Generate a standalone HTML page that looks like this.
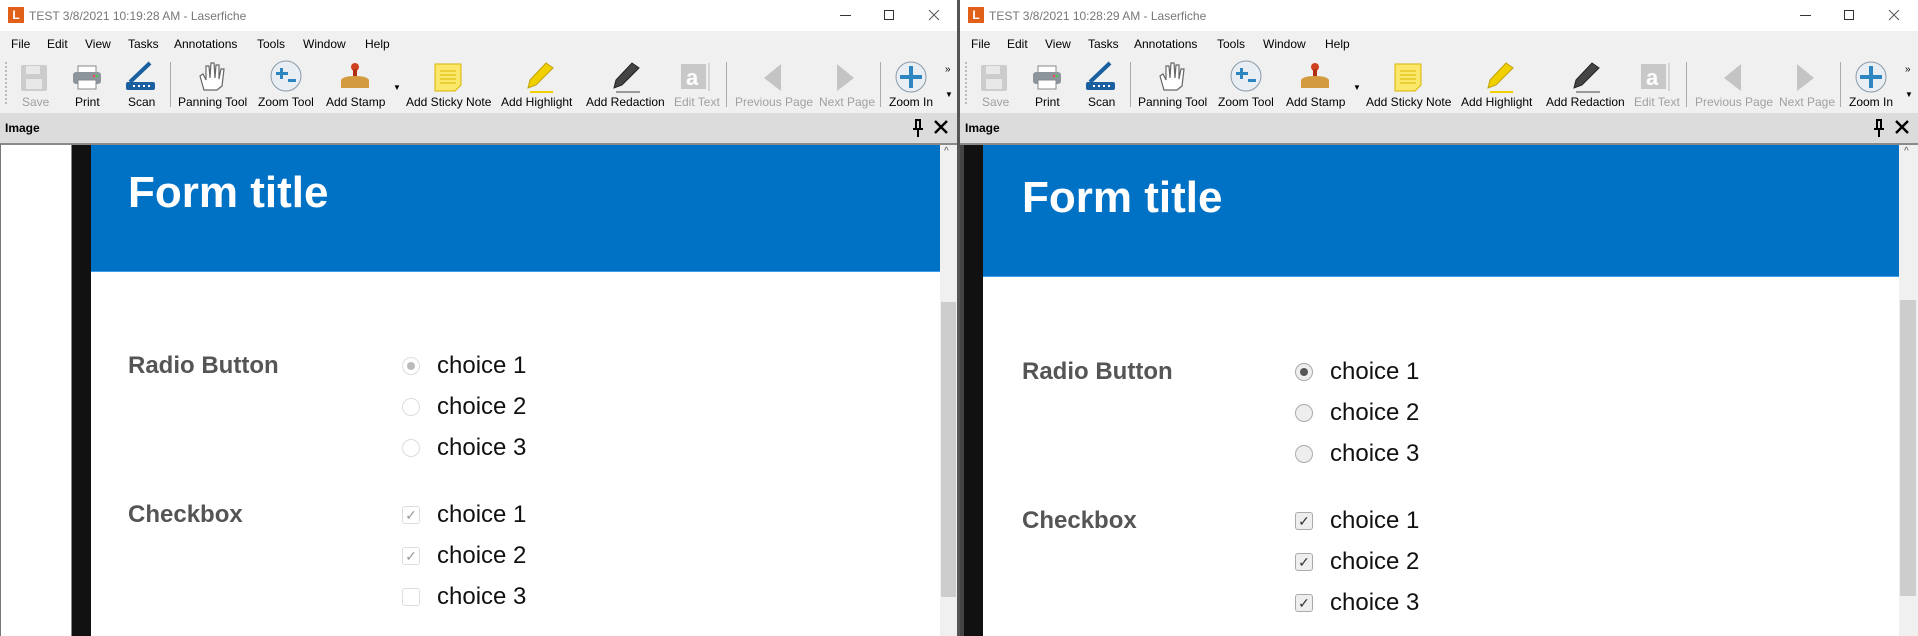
<!DOCTYPE html>
<html><head><meta charset="utf-8"><style>
*{margin:0;padding:0;box-sizing:border-box}
body{width:1918px;height:636px;overflow:hidden;background:#555;font-family:"Liberation Sans",Arial,sans-serif;position:relative}
.win{position:absolute;top:0;height:636px;background:#f0f0f0;overflow:hidden}
.a{position:absolute;white-space:nowrap}
.title{left:0;right:0;top:0;height:31px;background:#fff}
.tt{font-size:12px;color:#777;top:9px;left:29px}
.logo{left:8px;top:7px;width:16px;height:16px;background:#e0601a;color:#fff;font-size:12px;font-weight:bold;text-align:center;line-height:16px}
.menu{font-size:12px;color:#000;top:37px}
.lbl{font-size:12px;color:#000;top:95px}
.dis{color:#a0a0a0}
.sep{width:1px;height:45px;top:62px;background:#aaa}
.hdr{left:0;right:0;top:113px;height:30px;background:#dcdcdc}
.hdrt{font-size:12px;font-weight:bold;top:121px;left:5px}
.content{left:0;right:0;top:143px;bottom:0;background:#fff;border-top:2px solid #8a8a8a}
.ft{color:#fff;font-weight:bold;font-size:44px}
.fl{color:#555;font-weight:bold;font-size:24px}
.ch{color:#111;font-size:24px}
.rd{width:18px;height:18px;border-radius:50%;border:1px solid #ccc;background:#fff}
.cb{width:18px;height:18px;border-radius:3px;border:1px solid #ccc;background:#fff;color:#999;font-size:14px;text-align:center;line-height:16px}
</style></head><body>

<!-- LEFT WINDOW -->
<div class="win" style="left:0;width:957px">
 <div class="a title"></div>
 <div class="a logo">L</div>
 <div class="a tt">TEST 3/8/2021 10:19:28 AM - Laserfiche</div>
 <div class="a" style="left:840px;top:15px;width:11px;height:1px;background:#333"></div>
 <div class="a" style="left:884px;top:10px;width:10px;height:10px;border:1px solid #333"></div>
 <svg class="a" style="left:928px;top:9px" width="12" height="12"><path d="M1 1L11 11M11 1L1 11" stroke="#555" stroke-width="1"/></svg>
 <div class="a menu" style="left:11px">File</div><div class="a menu" style="left:47px">Edit</div><div class="a menu" style="left:85px">View</div><div class="a menu" style="left:128px">Tasks</div><div class="a menu" style="left:174px">Annotations</div><div class="a menu" style="left:257px">Tools</div><div class="a menu" style="left:303px">Window</div><div class="a menu" style="left:365px">Help</div>
 <div class="a" style="left:5px;top:62px;width:2px;height:42px;border-left:2px dotted #bbb"></div>
 <svg class="a" style="left:0;top:58px" width="957" height="36">
  <g fill="#ccc"><rect x="21" y="7" width="26" height="26" rx="2"/></g><rect x="26" y="8" width="14" height="8" fill="#e8e8e8"/><rect x="26" y="21" width="16" height="10" fill="#e8e8e8"/>
  <rect x="78" y="8" width="18" height="8" fill="#fff" stroke="#888"/><rect x="73" y="14" width="28" height="12" rx="3" fill="#8c959c"/><rect x="78" y="22" width="18" height="9" fill="#fff" stroke="#888"/><rect x="93" y="17" width="2" height="2" fill="#e44"/><rect x="96" y="17" width="2" height="2" fill="#4c4"/>
  <line x1="130" y1="24" x2="150" y2="5" stroke="#1a5fa0" stroke-width="4"/><rect x="126" y="24" width="29" height="8" rx="2" fill="#1a5fa0"/><g fill="#fff"><rect x="133" y="27" width="2" height="2"/><rect x="138" y="27" width="2" height="2"/><rect x="143" y="27" width="2" height="2"/><rect x="148" y="27" width="2" height="2"/></g>
  <path d="M204 32 L200 18 L203 16 L206 22 L206 8 L209 8 L210 20 L211 5 L214 5 L215 20 L216 7 L219 7 L219 21 L221 11 L224 11 L222 28 L217 32 Z" fill="#fff" stroke="#666" stroke-width="1.2"/>
  <circle cx="286" cy="18" r="15" fill="#e8eef3" stroke="#8a9aa8"/><rect x="276" y="14" width="12" height="3" fill="#2e86c1"/><rect x="280" y="10" width="3" height="11" fill="#2e86c1"/><rect x="288" y="21" width="8" height="3" fill="#2e86c1"/>
  <circle cx="355" cy="9" r="4" fill="#d04020"/><rect x="353" y="11" width="4" height="9" fill="#b03010"/><path d="M341 22 Q343 18 355 18 Q367 18 369 22 L369 30 L341 30 Z" fill="#d49a40"/>
  <text x="393" y="32" font-size="8" fill="#000">▼</text>
  <path d="M435 6 H461 V27 L455 33 H435 Z" fill="#fbe86a" stroke="#d8b400"/><g stroke="#d8b400"><line x1="440" y1="13" x2="456" y2="13"/><line x1="440" y1="17" x2="456" y2="17"/><line x1="440" y1="21" x2="456" y2="21"/><line x1="440" y1="25" x2="456" y2="25"/></g>
  <path d="M528 30 L530 22 L546 5 L553 10 L536 27 Z" fill="#f0d000" stroke="#c0a000"/><line x1="530" y1="34" x2="553" y2="34" stroke="#f0d000" stroke-width="2"/>
  <path d="M614 30 L616 22 L632 5 L639 10 L622 27 Z" fill="#444" stroke="#222"/><line x1="616" y1="34" x2="640" y2="34" stroke="#444"/>
  <rect x="681" y="6" width="25" height="25" fill="#c8c8c8"/><text x="686" y="27" font-size="22" font-weight="bold" fill="#fff">a</text><line x1="709" y1="5" x2="709" y2="33" stroke="#bbb"/>
  <path d="M781 6 L764 20 L781 33 Z" fill="#c4c4c4"/><path d="M837 6 L854 20 L837 33 Z" fill="#c4c4c4"/>
  <circle cx="911" cy="19" r="15" fill="#e8eef3" stroke="#8a9aa8"/><rect x="900" y="17" width="22" height="4" fill="#2e86c1"/><rect x="909" y="8" width="4" height="22" fill="#2e86c1"/>
 </svg>
 <div class="a sep" style="left:170px"></div><div class="a sep" style="left:726px"></div><div class="a sep" style="left:880px"></div>
 <div class="a" style="left:945px;top:64px;font-size:10px">»</div>
 <div class="a" style="left:945px;top:90px;font-size:8px">▼</div>
 <div class="a lbl dis" style="left:22px">Save</div><div class="a lbl" style="left:75px">Print</div><div class="a lbl" style="left:128px">Scan</div><div class="a lbl" style="left:178px">Panning Tool</div><div class="a lbl" style="left:258px">Zoom Tool</div><div class="a lbl" style="left:326px">Add Stamp</div><div class="a lbl" style="left:406px">Add Sticky Note</div><div class="a lbl" style="left:501px">Add Highlight</div><div class="a lbl" style="left:586px">Add Redaction</div><div class="a lbl dis" style="left:674px">Edit Text</div><div class="a lbl dis" style="left:735px">Previous Page</div><div class="a lbl dis" style="left:819px">Next Page</div><div class="a lbl" style="left:889px">Zoom In</div>
 <div class="a hdr"></div><div class="a hdrt">Image</div>
 <svg class="a" style="left:911px;top:118px" width="14" height="20"><path d="M4 2H10M5 2V11M9 2V11M2 11H12M7 11V19" stroke="#000" stroke-width="2" fill="none"/></svg>
 <svg class="a" style="left:934px;top:120px" width="14" height="14"><path d="M1 1L13 13M13 1L1 13" stroke="#000" stroke-width="2.4"/></svg>
 <div class="a content" style="border-left:1px solid #777"></div>
 <div class="a" style="left:71px;top:145px;width:1px;height:491px;background:#888"></div>
 <div class="a" style="left:72px;top:145px;width:19px;height:491px;background:#111"></div>
 <div class="a" style="left:91px;top:145px;width:849px;height:127px;background:#0072c6"></div>
 <div class="a" style="left:91px;top:271px;width:849px;height:1px;background:#3d9be9"></div>
 <div class="a" style="left:940px;top:145px;width:17px;height:491px;background:#f0f0f0"></div>
 <div class="a" style="left:941px;top:302px;width:15px;height:295px;background:#cdcdcd"></div>
 <div class="a" style="left:944px;top:146px;font-size:10px;color:#555">^</div>
 <div class="a ft" style="left:128px;top:168px">Form title</div>
 <div class="a fl" style="left:128px;top:352px">Radio Button</div>
 <div class="a fl" style="left:128px;top:501px">Checkbox</div>
 <div class="a rd" style="left:402px;top:357px;border-color:#ddd"><div style="width:8px;height:8px;border-radius:50%;background:#bbb;margin:4px"></div></div>
 <div class="a rd" style="left:402px;top:398px;border-color:#ddd"></div>
 <div class="a rd" style="left:402px;top:439px;border-color:#ddd"></div>
 <div class="a cb" style="left:402px;top:506px;border-color:#ddd">✓</div>
 <div class="a cb" style="left:402px;top:547px;border-color:#ddd">✓</div>
 <div class="a cb" style="left:402px;top:588px;border-color:#ddd"></div>
 <div class="a ch" style="left:437px;top:352px">choice 1</div><div class="a ch" style="left:437px;top:393px">choice 2</div><div class="a ch" style="left:437px;top:434px">choice 3</div>
 <div class="a ch" style="left:437px;top:501px">choice 1</div><div class="a ch" style="left:437px;top:542px">choice 2</div><div class="a ch" style="left:437px;top:583px">choice 3</div>
</div>

<!-- RIGHT WINDOW -->
<div class="win" style="left:960px;width:958px">
 <div class="a title"></div>
 <div class="a logo">L</div>
 <div class="a tt">TEST 3/8/2021 10:28:29 AM - Laserfiche</div>
 <div class="a" style="left:840px;top:15px;width:11px;height:1px;background:#333"></div>
 <div class="a" style="left:884px;top:10px;width:10px;height:10px;border:1px solid #333"></div>
 <svg class="a" style="left:928px;top:9px" width="12" height="12"><path d="M1 1L11 11M11 1L1 11" stroke="#555" stroke-width="1"/></svg>
 <div class="a menu" style="left:11px">File</div><div class="a menu" style="left:47px">Edit</div><div class="a menu" style="left:85px">View</div><div class="a menu" style="left:128px">Tasks</div><div class="a menu" style="left:174px">Annotations</div><div class="a menu" style="left:257px">Tools</div><div class="a menu" style="left:303px">Window</div><div class="a menu" style="left:365px">Help</div>
 <div class="a" style="left:5px;top:62px;width:2px;height:42px;border-left:2px dotted #bbb"></div>
 <svg class="a" style="left:0;top:58px" width="958" height="36">
  <g fill="#ccc"><rect x="21" y="7" width="26" height="26" rx="2"/></g><rect x="26" y="8" width="14" height="8" fill="#e8e8e8"/><rect x="26" y="21" width="16" height="10" fill="#e8e8e8"/>
  <rect x="78" y="8" width="18" height="8" fill="#fff" stroke="#888"/><rect x="73" y="14" width="28" height="12" rx="3" fill="#8c959c"/><rect x="78" y="22" width="18" height="9" fill="#fff" stroke="#888"/><rect x="93" y="17" width="2" height="2" fill="#e44"/><rect x="96" y="17" width="2" height="2" fill="#4c4"/>
  <line x1="130" y1="24" x2="150" y2="5" stroke="#1a5fa0" stroke-width="4"/><rect x="126" y="24" width="29" height="8" rx="2" fill="#1a5fa0"/><g fill="#fff"><rect x="133" y="27" width="2" height="2"/><rect x="138" y="27" width="2" height="2"/><rect x="143" y="27" width="2" height="2"/><rect x="148" y="27" width="2" height="2"/></g>
  <path d="M204 32 L200 18 L203 16 L206 22 L206 8 L209 8 L210 20 L211 5 L214 5 L215 20 L216 7 L219 7 L219 21 L221 11 L224 11 L222 28 L217 32 Z" fill="#fff" stroke="#666" stroke-width="1.2"/>
  <circle cx="286" cy="18" r="15" fill="#e8eef3" stroke="#8a9aa8"/><rect x="276" y="14" width="12" height="3" fill="#2e86c1"/><rect x="280" y="10" width="3" height="11" fill="#2e86c1"/><rect x="288" y="21" width="8" height="3" fill="#2e86c1"/>
  <circle cx="355" cy="9" r="4" fill="#d04020"/><rect x="353" y="11" width="4" height="9" fill="#b03010"/><path d="M341 22 Q343 18 355 18 Q367 18 369 22 L369 30 L341 30 Z" fill="#d49a40"/>
  <text x="393" y="32" font-size="8" fill="#000">▼</text>
  <path d="M435 6 H461 V27 L455 33 H435 Z" fill="#fbe86a" stroke="#d8b400"/><g stroke="#d8b400"><line x1="440" y1="13" x2="456" y2="13"/><line x1="440" y1="17" x2="456" y2="17"/><line x1="440" y1="21" x2="456" y2="21"/><line x1="440" y1="25" x2="456" y2="25"/></g>
  <path d="M528 30 L530 22 L546 5 L553 10 L536 27 Z" fill="#f0d000" stroke="#c0a000"/><line x1="530" y1="34" x2="553" y2="34" stroke="#f0d000" stroke-width="2"/>
  <path d="M614 30 L616 22 L632 5 L639 10 L622 27 Z" fill="#444" stroke="#222"/><line x1="616" y1="34" x2="640" y2="34" stroke="#444"/>
  <rect x="681" y="6" width="25" height="25" fill="#c8c8c8"/><text x="686" y="27" font-size="22" font-weight="bold" fill="#fff">a</text><line x1="709" y1="5" x2="709" y2="33" stroke="#bbb"/>
  <path d="M781 6 L764 20 L781 33 Z" fill="#c4c4c4"/><path d="M837 6 L854 20 L837 33 Z" fill="#c4c4c4"/>
  <circle cx="911" cy="19" r="15" fill="#e8eef3" stroke="#8a9aa8"/><rect x="900" y="17" width="22" height="4" fill="#2e86c1"/><rect x="909" y="8" width="4" height="22" fill="#2e86c1"/>
 </svg>
 <div class="a sep" style="left:170px"></div><div class="a sep" style="left:726px"></div><div class="a sep" style="left:880px"></div>
 <div class="a" style="left:945px;top:64px;font-size:10px">»</div>
 <div class="a" style="left:945px;top:90px;font-size:8px">▼</div>
 <div class="a lbl dis" style="left:22px">Save</div><div class="a lbl" style="left:75px">Print</div><div class="a lbl" style="left:128px">Scan</div><div class="a lbl" style="left:178px">Panning Tool</div><div class="a lbl" style="left:258px">Zoom Tool</div><div class="a lbl" style="left:326px">Add Stamp</div><div class="a lbl" style="left:406px">Add Sticky Note</div><div class="a lbl" style="left:501px">Add Highlight</div><div class="a lbl" style="left:586px">Add Redaction</div><div class="a lbl dis" style="left:674px">Edit Text</div><div class="a lbl dis" style="left:735px">Previous Page</div><div class="a lbl dis" style="left:819px">Next Page</div><div class="a lbl" style="left:889px">Zoom In</div>
 <div class="a hdr"></div><div class="a hdrt">Image</div>
 <svg class="a" style="left:912px;top:118px" width="14" height="20"><path d="M4 2H10M5 2V11M9 2V11M2 11H12M7 11V19" stroke="#000" stroke-width="2" fill="none"/></svg>
 <svg class="a" style="left:935px;top:120px" width="14" height="14"><path d="M1 1L13 13M13 1L1 13" stroke="#000" stroke-width="2.4"/></svg>
 <div class="a content"></div>
 <div class="a" style="left:0;top:145px;width:4px;height:491px;background:#444"></div>
 <div class="a" style="left:4px;top:145px;width:19px;height:491px;background:#111"></div>
 <div class="a" style="left:23px;top:145px;width:916px;height:132px;background:#0072c6"></div>
 <div class="a" style="left:23px;top:276px;width:916px;height:1px;background:#3d9be9"></div>
 <div class="a" style="left:939px;top:145px;width:19px;height:491px;background:#f0f0f0"></div>
 <div class="a" style="left:940px;top:300px;width:16px;height:296px;background:#cdcdcd"></div>
 <div class="a" style="left:944px;top:146px;font-size:10px;color:#555">^</div>
 <div class="a ft" style="left:62px;top:173px">Form title</div>
 <div class="a fl" style="left:62px;top:358px">Radio Button</div>
 <div class="a fl" style="left:62px;top:507px">Checkbox</div>
 <div class="a rd" style="left:335px;top:363px;border-color:#aaa;background:#eee"><div style="width:8px;height:8px;border-radius:50%;background:#555;margin:4px"></div></div>
 <div class="a rd" style="left:335px;top:404px;border-color:#aaa;background:#eee"></div>
 <div class="a rd" style="left:335px;top:445px;border-color:#aaa;background:#eee"></div>
 <div class="a cb" style="left:335px;top:512px;border-color:#aaa;background:#eee;color:#333">✓</div>
 <div class="a cb" style="left:335px;top:553px;border-color:#aaa;background:#eee;color:#333">✓</div>
 <div class="a cb" style="left:335px;top:594px;border-color:#aaa;background:#eee;color:#333">✓</div>
 <div class="a ch" style="left:370px;top:358px">choice 1</div><div class="a ch" style="left:370px;top:399px">choice 2</div><div class="a ch" style="left:370px;top:440px">choice 3</div>
 <div class="a ch" style="left:370px;top:507px">choice 1</div><div class="a ch" style="left:370px;top:548px">choice 2</div><div class="a ch" style="left:370px;top:589px">choice 3</div>
</div>
</body></html>
